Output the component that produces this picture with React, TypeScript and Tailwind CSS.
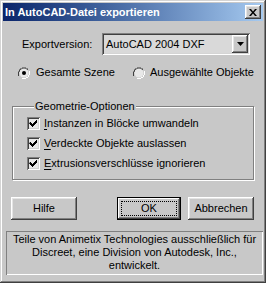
const face = "bg-[#c8c8c8]";

function Raised({ className = "", children }: { className?: string; children?: React.ReactNode }) {
  return (
    <div
      className={`${face} shadow-[inset_-1px_-1px_#404040,inset_1px_1px_#ffffff,inset_-2px_-2px_#808080,inset_2px_2px_#e4e4e4] ${className}`}
    >
      {children}
    </div>
  );
}

function Radio({ checked }: { checked?: boolean }) {
  return (
    <svg width="12" height="12" viewBox="0 0 12 12" className="shrink-0">
      <path d="M4 0h4v1h2v1h-2v-1h-4v1h-2v2h-1v4h-1v-4h1v-2h1v-1h2z" fill="#808080" />
      <path d="M4 1h4v1h2v1h-2v-1h-4v1h-2v2h-1v4h-1v-4h1v-2h1v-1h2z" fill="#404040" />
      <circle cx="6" cy="6" r="4.5" fill="#e8e8e8" />
      <path d="M11 4v4h-1v2h-2v1h-4v1h4v-1h2v-1h1v-2h1v-4z" fill="#ffffff" />
      {checked && <circle cx="6" cy="6" r="2" fill="#000" />}
    </svg>
  );
}

function Check({ label, u }: { label: string; u: string }) {
  return (
    <div className="flex h-[13px] items-center">
      <div className="h-[13px] w-[13px] shrink-0 bg-[#e8e8e8] shadow-[inset_1px_1px_#808080,inset_-1px_-1px_#ffffff,inset_2px_2px_#404040,inset_-2px_-2px_#d4d4d4]">
        <svg width="13" height="13" viewBox="0 0 13 13">
          <path d="M3 5h1v1h1v1h1v-1h1v-1h1v-1h1v-1h1v3h-1v1h-1v1h-1v1h-1v1h-1v-1h-1v-1h-1v-1h-1z" fill="#000" />
        </svg>
      </div>
      <span className="ml-[4px]">
        <span className="underline underline-offset-[2px]">{u}</span>
        {label}
      </span>
    </div>
  );
}

export default function App() {
  return (
    <div
      className={`h-[283px] w-[266px] p-[3px] ${face} text-[11px] leading-[13px] text-black shadow-[inset_-1px_-1px_#404040,inset_1px_1px_#d4d4d4,inset_-2px_-2px_#808080,inset_2px_2px_#ffffff]`}
      style={{ fontFamily: '"Liberation Sans", Arial, sans-serif' }}
    >
      <div className="flex h-[18px] items-center bg-linear-to-r from-[#0a246a] to-[#a6caf0] pl-[2px] pr-[2px]">
        <span className="whitespace-nowrap text-[11px] font-bold text-white">In AutoCAD-Datei exportieren</span>
        <Raised className="ml-auto flex h-[14px] w-[16px] items-center justify-center">
          <svg width="8" height="7" viewBox="0 0 8 7">
            <path d="M0 0h2l2 2.5l2-2.5h2l-3 3.5l3 3.5h-2l-2-2.5l-2 2.5h-2l3-3.5z" fill="#000" />
          </svg>
        </Raised>
      </div>

      <div className="mt-[12px] flex h-[22px] items-center">
        <span className="ml-[19px] w-[80px]">Exportversion:</span>
        <div className="flex h-[22px] w-[148px] items-center bg-[#d9d9d9] p-[2px] shadow-[inset_1px_1px_#808080,inset_-1px_-1px_#ffffff,inset_2px_2px_#404040,inset_-2px_-2px_#d4d4d4]">
          <span className="ml-[2px] flex-1">AutoCAD 2004 DXF</span>
          <Raised className="flex h-[18px] w-[16px] items-center justify-center">
            <svg width="7" height="4" viewBox="0 0 7 4">
              <path d="M0 0h7l-3.5 4z" fill="#000" />
            </svg>
          </Raised>
        </div>
      </div>

      <div className="mt-[11px] flex h-[13px] items-center">
        <div className="ml-[15px] flex w-[115px] items-center gap-[6px]">
          <Radio checked />
          <span>Gesamte Szene</span>
        </div>
        <div className="flex items-center gap-[5px]">
          <Radio />
          <span>Ausgewählte Objekte</span>
        </div>
      </div>

      <fieldset className="ml-[9px] mt-[21px] w-[242px] border border-[#808080] pb-[9px] pl-[14px] shadow-[inset_1px_1px_#ffffff,1px_1px_#ffffff]">
        <legend className={`ml-[7px] px-[1px] ${face}`}>Geometrie-Optionen</legend>
        <div className="mt-[4px] flex flex-col gap-[7px]">
          <Check u="I" label="nstanzen in Blöcke umwandeln" />
          <Check u="V" label="erdeckte Objekte auslassen" />
          <Check u="E" label="xtrusionsverschlüsse ignorieren" />
        </div>
      </fieldset>

      <div className="mt-[17px] flex h-[23px]">
        <Raised className="ml-[8px] flex w-[66px] items-center justify-center">Hilfe</Raised>
        <div className="ml-[40px] flex w-[64px] items-center justify-center bg-[#c8c8c8] shadow-[inset_0_0_0_1px_#000,inset_-2px_-2px_#404040,inset_2px_2px_#ffffff,inset_-3px_-3px_#808080]">
          <div className="flex h-[15px] w-[56px] items-center justify-center border border-dotted border-black">OK</div>
        </div>
        <Raised className="ml-[7px] flex w-[66px] items-center justify-center">Abbrechen</Raised>
      </div>

      <div className="ml-[3px] mt-[11px] h-[44px] w-[257px] pt-[2px] text-center shadow-[inset_1px_1px_#808080,inset_-1px_-1px_#ffffff]">
        Teile von Animetix Technologies ausschließlich für
        <br />
        Discreet, eine Division von Autodesk, Inc.,
        <br />
        entwickelt.
      </div>
    </div>
  );
}
